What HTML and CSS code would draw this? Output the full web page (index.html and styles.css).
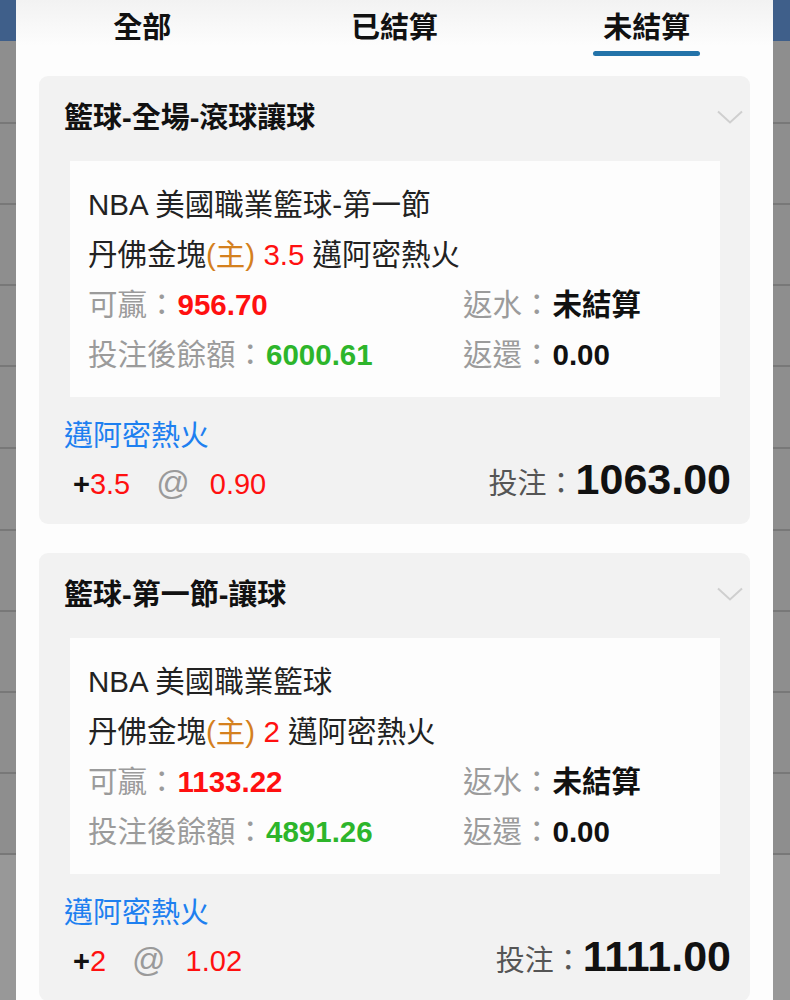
FILE: index.html
```html
<!DOCTYPE html>
<html>
<head>
    <title>注單紀錄</title>
    <meta name="viewport" content="width=device-width, initial-scale=1.0">
    <link rel="stylesheet" href="styles.css">
</head>

<body>
    <div class="panel">
        <div class="tabs">
            <div class="tab">全部</div>
            <div class="tab">已結算</div>
            <div class="tab active">未結算<span class="tab-line"></span></div>
        </div>

        <div class="bet-list">
            <!-- 注單 1 -->
            <div class="bet-card">
                <div class="bet-head">
                    <span class="bet-type">籃球-全場-滾球讓球</span>
                    <svg class="chevron" width="26" height="14" viewBox="0 0 26 14"><polyline points="1,1.5 13,12.5 25,1.5" fill="none" stroke="#cfcfcf" stroke-width="2"/></svg>
                </div>
                <div class="bet-info">
                    <div class="line">NBA 美國職業籃球-第一節</div>
                    <div class="line">丹佛金塊<span class="home">(主)</span> <span class="red">3.5</span> 邁阿密熱火</div>
                    <div class="stats">
                        <div class="stat"><span class="label">可贏：</span><b class="red">956.70</b></div>
                        <div class="stat"><span class="label">返水：</span><b>未結算</b></div>
                        <div class="stat"><span class="label">投注後餘額：</span><b class="green">6000.61</b></div>
                        <div class="stat"><span class="label">返還：</span><b>0.00</b></div>
                    </div>
                </div>
                <div class="pick">邁阿密熱火</div>
                <div class="bet-foot">
                    <div class="odds"><b>+</b><span class="red">3.5</span><span class="at">@</span><span class="red price">0.90</span></div>
                    <div class="stake"><span class="stake-label">投注：</span><b>1063.00</b></div>
                </div>
            </div>

            <!-- 注單 2 -->
            <div class="bet-card">
                <div class="bet-head">
                    <span class="bet-type">籃球-第一節-讓球</span>
                    <svg class="chevron" width="26" height="14" viewBox="0 0 26 14"><polyline points="1,1.5 13,12.5 25,1.5" fill="none" stroke="#cfcfcf" stroke-width="2"/></svg>
                </div>
                <div class="bet-info">
                    <div class="line">NBA 美國職業籃球</div>
                    <div class="line">丹佛金塊<span class="home">(主)</span> <span class="red">2</span> 邁阿密熱火</div>
                    <div class="stats">
                        <div class="stat"><span class="label">可贏：</span><b class="red">1133.22</b></div>
                        <div class="stat"><span class="label">返水：</span><b>未結算</b></div>
                        <div class="stat"><span class="label">投注後餘額：</span><b class="green">4891.26</b></div>
                        <div class="stat"><span class="label">返還：</span><b>0.00</b></div>
                    </div>
                </div>
                <div class="pick">邁阿密熱火</div>
                <div class="bet-foot">
                    <div class="odds"><b>+</b><span class="red">2</span><span class="at">@</span><span class="red price">1.02</span></div>
                    <div class="stake"><span class="stake-label">投注：</span><b>1111.00</b></div>
                </div>
            </div>
        </div>
    </div>
</body>
</html>
```

FILE: styles.css
```css
html,
body {
    height: 1000px;
    overflow: hidden;
}

html {
    background: linear-gradient(to bottom,
        #3f5f8a 0 41px,
        #8e8e8e 41px 122px, #787878 122px 124px,
        #8e8e8e 124px 203px, #787878 203px 205px,
        #8e8e8e 205px 284px, #787878 284px 286px,
        #8e8e8e 286px 365px, #787878 365px 367px,
        #8e8e8e 367px 447px, #787878 447px 449px,
        #8e8e8e 449px 529px, #787878 529px 531px,
        #8e8e8e 531px 610px, #787878 610px 612px,
        #8e8e8e 612px 691px, #787878 691px 693px,
        #8e8e8e 693px 772px, #787878 772px 774px,
        #8e8e8e 774px 853px, #787878 853px 855px,
        #989898 855px 1000px);
}

body {
    margin: 0;
    font-family: "Liberation Sans", "Noto Sans CJK TC", sans-serif;
    color: #1a1a1a;
}

.panel {
    margin: 0 17px 0 16px;
    height: 1000px;
    background: linear-gradient(#f2f2f2, #fdfdfd 46px);
}

/* tabs */
.tabs {
    display: grid;
    grid-template-columns: 1fr 1fr 1fr;
    padding-top: 8px;
    height: 68px;
    box-sizing: border-box;
}

.tab {
    display: flex;
    flex-direction: column;
    align-items: center;
    font-size: 29px;
    font-weight: 700;
    line-height: 40px;
    color: #111;
}

.tab-line {
    display: block;
    width: 107px;
    height: 5px;
    margin-top: 3px;
    border-radius: 3px;
    background: #2373a9;
}

/* cards */
.bet-list {
    padding: 8px 23px 0 23px;
}

.bet-card {
    background: #f2f2f2;
    border-radius: 9px;
    padding: 19px 25px 10px 25px;
    margin-bottom: 29px;
}

.bet-head {
    display: flex;
    justify-content: space-between;
    align-items: center;
    height: 40px;
    margin-bottom: 26px;
}

.bet-type {
    font-size: 29px;
    font-weight: 700;
    color: #111;
}

.chevron {
    margin-right: -18px;
    margin-top: 4px;
}

.bet-info {
    background: #fdfdfd;
    margin: 0 5px 0 6px;
    padding: 19px 18px 17px 18px;
    font-size: 29.5px;
    line-height: 50px;
    color: #222;
}

.home {
    color: #d4801e;
}

.red {
    color: #ff1010;
}

.green {
    color: #2db52b;
}

.stats {
    display: grid;
    grid-template-columns: 375px 1fr;
}

.stat b {
    font-weight: 700;
    color: #111;
}

.stat b.red {
    color: #ff1010;
}

.stat b.green {
    color: #2db52b;
}

.label {
    color: #9b9b9b;
    margin-right: 1px;
}

.pick {
    margin-top: 21px;
    font-size: 29px;
    line-height: 36px;
    color: #1e80f0;
}

.bet-foot {
    display: flex;
    justify-content: space-between;
    align-items: baseline;
    line-height: 50px;
}

.odds {
    font-size: 29px;
    padding-left: 9px;
}

.odds b {
    font-weight: 700;
    color: #111;
}

.at {
    font-size: 33px;
    color: #9a9a9a;
    margin-left: 26px;
}

.price {
    margin-left: 20px;
}

.stake {
    margin-right: -6px;
}

.stake-label {
    font-size: 29px;
    color: #555;
}

.stake b {
    font-size: 43px;
    font-weight: 700;
    color: #111;
}
```
